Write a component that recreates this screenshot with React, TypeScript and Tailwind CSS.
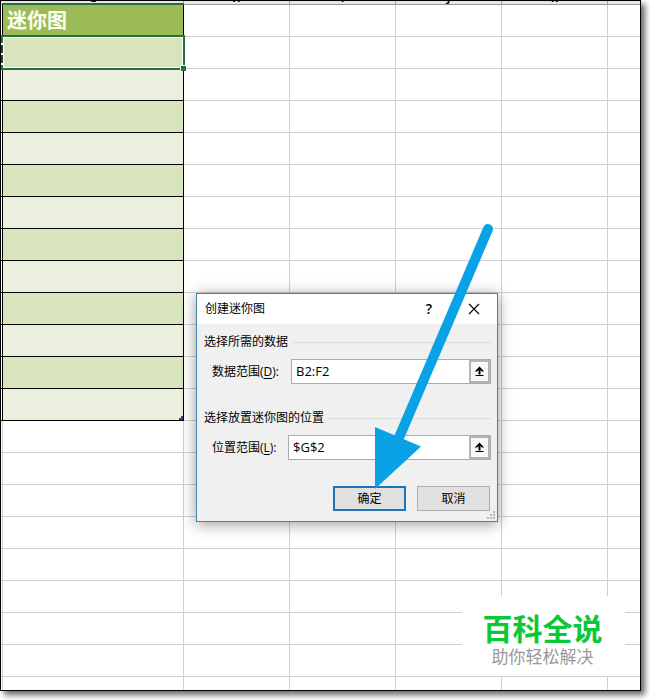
import React, { useState } from "react";

const columns = ["H", "I", "J", "K", "L"];
const bodyRows = Array.from({ length: 21 }, (_, i) => i);
const TABLE_LAST_ROW = 12;

function firstCellClass(row: number) {
  if (row === 0) return "border-black bg-[#9bbb59]";
  if (row > TABLE_LAST_ROW) return "border-[#d0d0d0] bg-white";
  return row % 2 === 1 ? "border-black bg-[#d8e4bc]" : "border-black bg-[#ebf0de]";
}

function Sheet() {
  return (
    <table className="w-full table-fixed border-separate border-spacing-0">
      <colgroup>
        <col className="w-[2px]" />
        <col className="w-[181px]" />
        <col className="w-[106px]" />
        <col className="w-[106px]" />
        <col className="w-[106px]" />
        <col className="w-[106px]" />
        <col />
      </colgroup>
      <thead>
        <tr className="h-1 bg-[#e8e4e8]">
          <th className="border-b border-[#999] p-0" />
          {["G", ...columns].map((name) => (
            <th key={name} className="border-b border-r border-[#999] p-0 last:border-r-0">
              <div className="flex h-[3px] items-end justify-center overflow-hidden text-[11px] leading-[12px] font-bold text-black">
                {name === "L" ? "" : name}
              </div>
            </th>
          ))}
        </tr>
      </thead>
      <tbody>
        {bodyRows.map((row) => (
          <tr key={row} className="h-8">
            <td
              className={`border-r border-b p-0 ${row <= TABLE_LAST_ROW ? "border-black" : "border-[#d0d0d0]"}`}
            />
            <td className={`border-r border-b p-0 pl-1 ${firstCellClass(row)}`}>
              {row === 0 && (
                <span className="block text-[20px] leading-7 font-bold text-[#fffff0]">迷你图</span>
              )}
            </td>
            {columns.map((name) => (
              <td key={name} className="border-r border-b border-[#d0d0d0] p-0 last:border-r-0" />
            ))}
          </tr>
        ))}
        <tr className="h-[13px]">
          <td className="border-r border-[#d0d0d0] p-0" />
          <td className="border-r border-[#d0d0d0] p-0" />
          {columns.map((name) => (
            <td key={name} className="border-r border-[#d0d0d0] p-0 last:border-r-0" />
          ))}
        </tr>
      </tbody>
    </table>
  );
}

function Selection() {
  return (
    <>
      <div className="absolute top-[2px] left-[1px] h-[2px] w-[182px] bg-[#2b6a3c]" />
      <div className="absolute top-[34px] left-0 h-[35px] w-[184px] border-2 border-[#25703f]">
        <div className="h-full border border-white" />
        <div className="absolute -right-[3px] -bottom-[3px] size-[6px] border-t border-l border-white bg-[#25703f]" />
      </div>
      <div className="absolute top-[42px] left-0 flex h-[22px] w-[2px] flex-col justify-between bg-[#2a3f34]">
        <span className="h-[2px] bg-white" />
        <span className="h-[2px] bg-white" />
        <span className="h-[2px] bg-white" />
      </div>
      <svg className="absolute top-[415px] left-[178px]" width="4" height="4" viewBox="0 0 4 4">
        <path d="M2 0h2v4H0V2h2z" fill="#40407c" />
      </svg>
    </>
  );
}

type RangeProps = {
  id: string;
  title: string;
  label: string;
  accessKey: string;
  initial: string;
  pad: string;
};

function RangeField({ id, title, label, accessKey, initial, pad }: RangeProps) {
  const [value, setValue] = useState(initial);
  return (
    <section className="flex flex-col gap-[7px]">
      <h2 className="flex h-5 items-center gap-1 text-xs font-normal">
        {title}
        <span className="h-px flex-1 bg-[#dcdcdc]" />
      </h2>
      <div className="flex h-[25px] items-center pl-2">
        <label htmlFor={id} className={`shrink-0 text-xs ${pad}`}>
          {label}(<span className="underline underline-offset-2">{accessKey}</span>):
        </label>
        <div className="flex h-full min-w-0 flex-1 border border-[#ababab] bg-white">
          <input
            id={id}
            value={value}
            onChange={(e) => setValue(e.target.value)}
            className="min-w-0 flex-1 px-1 text-[13px] outline-none"
          />
          <button
            type="button"
            aria-label={title}
            className="flex w-[21px] items-center justify-center border-2 border-[#b4b4b4] bg-[#f8f8f8]"
          >
            <svg className="shrink-0" width="11" height="11" viewBox="0 0 11 11" fill="none" stroke="#000">
              <path d="M5.5 2v6.500" strokeWidth="2" />
              <path d="M.8 5.500 5.500.5l4.700 5H8L5.500 3.500 3 5.500z" fill="#000" stroke="none" />
              <path d="M4 3.500h3" strokeWidth="1" />
              <path d="M1.500 9.500h8" />
            </svg>
          </button>
        </div>
      </div>
    </section>
  );
}

function SparklineDialog() {
  return (
    <div
      role="dialog"
      aria-label="创建迷你图"
      className="absolute top-[292px] left-[195px] w-[302px] border border-[#4383ad] bg-[#f0f0f0] text-black shadow-[0_2px_14px_rgba(0,0,0,0.4)]"
    >
      <header className="flex h-[30px] items-center bg-white pr-[15px] pl-2">
        <h1 className="flex-1 text-xs font-normal">创建迷你图</h1>
        <button type="button" aria-label="帮助" className="mr-[29px] w-4 text-sm font-semibold">
          ?
        </button>
        <button type="button" aria-label="关闭" className="flex w-4 justify-center">
          <svg width="12" height="12" viewBox="0 0 12 12" stroke="#000" strokeWidth="1.1">
            <path d="m1 1 10 10M11 1 1 11" />
          </svg>
        </button>
      </header>
      <div className="flex flex-col gap-6 pt-2 pr-[6px] pl-[7px]">
        <RangeField id="data" title="选择所需的数据" label="数据范围" accessKey="D" initial="B2:F2" pad="w-[79px]" />
        <RangeField id="place" title="选择放置迷你图的位置" label="位置范围" accessKey="L" initial="$G$2" pad="w-[76px]" />
      </div>
      <footer className="flex justify-end gap-[11px] pt-[26px] pr-[7px] pb-[10px]">
        <button type="button" className="h-[25px] w-[73px] border-2 border-[#1f74b8] bg-[#e1e1e1] text-xs">
          确定
        </button>
        <button type="button" className="h-[25px] w-[73px] border border-[#adadad] bg-[#e1e1e1] text-xs">
          取消
        </button>
      </footer>
      <svg className="absolute right-[2px] bottom-[2px]" width="8" height="8" viewBox="0 0 8 8" fill="#b8b8b8">
        <path d="M6 0h2v2H6zM3 3h2v2H3zM6 3h2v2H6zM0 6h2v2H0zM3 6h2v2H3zM6 6h2v2H6z" />
      </svg>
    </div>
  );
}

export default function App() {
  return (
    <div className="bg-white pr-[9px] pb-[9px] font-['Open_Sans','Noto_Sans_CJK_SC',sans-serif]">
      <main className="relative border border-black bg-white shadow-[4px_4px_6px_rgba(0,0,0,0.6)]">
        <Sheet />
        <Selection />
        <SparklineDialog />
        <svg
          className="pointer-events-none absolute top-[219px] left-[369px]"
          width="130"
          height="272"
          viewBox="370 220 130 272"
          fill="#0aa2e6"
        >
          <path d="M488 229 398 440" stroke="#0aa2e6" strokeWidth="10" strokeLinecap="round" />
          <path d="M375 427 421 446.500 375 489z" />
        </svg>
        <aside className="absolute right-[15px] bottom-[14px] flex h-[80px] w-[163px] flex-col items-center justify-end bg-white pr-[2px] pb-2">
          <strong className="text-[30px] leading-[34px] font-bold text-[#0bc837]">百科全说</strong>
          <span className="text-[17px] leading-[22px] text-[#999]">助你轻松解决</span>
        </aside>
      </main>
    </div>
  );
}
